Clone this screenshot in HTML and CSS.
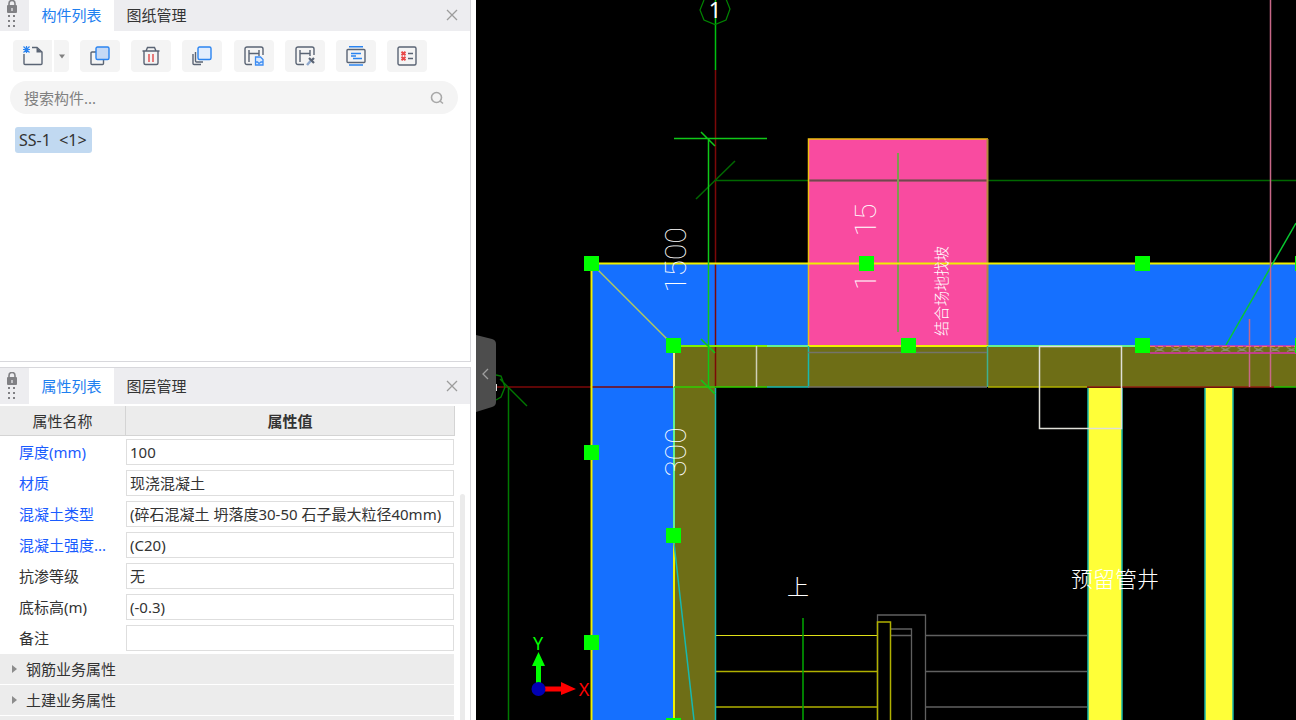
FILE: index.html
```html
<!DOCTYPE html>
<html lang="zh-CN">
<head>
    <meta charset="UTF-8">
    <meta name="viewport" content="width=device-width, initial-scale=1.0">
    <title>构件列表</title>
    <link rel="stylesheet" href="styles.css">
</head>
<body>
<aside class="dock">
    <section class="panel panel-components">
        <header class="panel-head">
            <svg class="grip" viewBox="0 0 12 28">
                <path d="M3 6V3.500a3 3 0 0 1 6 0V6" fill="none" stroke="#808084" stroke-width="1.600"/>
                <rect x="1" y="5" width="10" height="8" rx="1" fill="#808084"/>
                <rect x="5" y="8" width="2" height="3" fill="#c4c4c8"/>
                <path d="M2 15h2v2H2zM7 15h2v2H7zM2 20h2v2H2zM7 20h2v2H7zM2 25h2v2H2zM7 25h2v2H7z" fill="#808084"/>
            </svg>
            <button class="tab active">构件列表</button>
            <button class="tab">图纸管理</button>
            <button class="close" aria-label="关闭">
                <svg viewBox="0 0 12 12"><path d="M1 1l10 10M11 1L1 11"/></svg>
            </button>
        </header>

        <div class="toolbar">
            <div class="split">
                <button class="tool tool-new" aria-label="新建">
                    <svg viewBox="0 0 20 20">
                        <path class="ink" d="M1 8v9.500a1 1 0 0 0 1 1h16a1 1 0 0 0 1-1V6l-5-4.500H9"/>
                        <path d="M13.500 1.500L19 6.500h-5.500z" fill="#5a6474"/>
                        <path d="M0.500 0.500l6 6M6.500 0.500l-6 6M3.500 0v7M0 3.500h7" fill="none" stroke="#2b84f0" stroke-width="1.200"/>
                    </svg>
                </button>
                <button class="tool tool-more" aria-label="更多">
                    <svg viewBox="0 0 8 5"><path d="M1 0.500h6L4 4.500z" fill="#808080"/></svg>
                </button>
            </div>
            <button class="tool" aria-label="复制">
                <svg viewBox="0 0 20 20">
                    <path class="ink" d="M6 6H2a1 1 0 0 0-1 1v10.500a1 1 0 0 0 1 1h10.500a1 1 0 0 0 1-1V14"/>
                    <rect x="6" y="1" width="13" height="12.500" rx="1.500" fill="#c6d9f5" stroke="#2b84f0" stroke-width="1.400"/>
                </svg>
            </button>
            <button class="tool" aria-label="删除">
                <svg viewBox="0 0 20 20">
                    <path class="ink" d="M1.500 5h17M5 5l1.500-3.500h7L15 5M3 5v12a1.500 1.500 0 0 0 1.500 1.500h11A1.500 1.500 0 0 0 17 17V5"/>
                    <path d="M8 8v8M12 8v8" stroke="#e04848" stroke-width="1.400"/>
                </svg>
            </button>
            <button class="tool" aria-label="层间复制">
                <svg viewBox="0 0 20 20">
                    <path class="ink" d="M3.500 6v9a1 1 0 0 0 1 1H11M1 8v9.500a1 1 0 0 0 1 1h7"/>
                    <rect x="6" y="1" width="13" height="12.500" rx="1.500" fill="#e2edfd" stroke="#2b84f0" stroke-width="1.400"/>
                </svg>
            </button>
            <button class="tool" aria-label="存档">
                <svg viewBox="0 0 20 20">
                    <path class="ink" d="M8 18.500H3a2 2 0 0 1-2-2V3a2 2 0 0 1 2-2h14a2 2 0 0 1 2 2v6M5 4v12M5 7.500h10M15 4V10"/>
                    <path d="M11.500 11h5l2.500 2.500v5.500h-7.500zM11.500 16h2l1.500 1.500 2-1.500h2" fill="#dceafd" stroke="#3c8cf2" stroke-width="1.300"/>
                </svg>
            </button>
            <button class="tool" aria-label="提取">
                <svg viewBox="0 0 20 20">
                    <path class="ink" d="M9 18.500H3a2 2 0 0 1-2-2V3a2 2 0 0 1 2-2h14a2 2 0 0 1 2 2v6M5 4v12M5 7.500h10M15 4V10"/>
                    <path d="M12 19l4-4.500" stroke="#8fa8cc" stroke-width="2.500"/>
                    <path d="M14 12l5 5M16.500 14.500L19 12" stroke="#5a6474" stroke-width="2.200"/>
                </svg>
            </button>
            <button class="tool" aria-label="对齐">
                <svg viewBox="0 0 20 20">
                    <rect class="ink" x="1" y="3.500" width="18" height="13" rx="1"/>
                    <path d="M3 0.800h14M3 19h14M5 7.500h10M5 10h5M7 12.500h9" fill="none" stroke="#2b84f0" stroke-width="1.400"/>
                </svg>
            </button>
            <button class="tool" aria-label="列表">
                <svg viewBox="0 0 20 20">
                    <rect class="ink" x="1" y="1" width="18" height="18" rx="1.500"/>
                    <path class="ink" d="M11 7.500h5M11 12.500h5"/>
                    <path d="M4.500 5.800l4 3.400M8.500 5.800l-4 3.400M4.500 10.800l4 3.400M8.500 10.800l-4 3.400" stroke="#e84848" stroke-width="2"/>
                </svg>
            </button>
        </div>

        <div class="search">
            <input type="text" placeholder="搜索构件..." aria-label="搜索构件">
            <svg viewBox="0 0 14 14"><circle cx="6.500" cy="6.500" r="5"/><path d="M10 10l3 2.500"/></svg>
        </div>

        <ul class="component-list">
            <li class="selected">SS-1  &lt;1&gt;</li>
        </ul>
    </section>

    <section class="panel panel-props">
        <header class="panel-head">
            <svg class="grip" viewBox="0 0 12 28">
                <path d="M3 6V3.500a3 3 0 0 1 6 0V6" fill="none" stroke="#808084" stroke-width="1.600"/>
                <rect x="1" y="5" width="10" height="8" rx="1" fill="#808084"/>
                <rect x="5" y="8" width="2" height="3" fill="#c4c4c8"/>
                <path d="M2 15h2v2H2zM7 15h2v2H7zM2 20h2v2H2zM7 20h2v2H7zM2 25h2v2H2zM7 25h2v2H7z" fill="#808084"/>
            </svg>
            <button class="tab active">属性列表</button>
            <button class="tab">图层管理</button>
            <button class="close" aria-label="关闭">
                <svg viewBox="0 0 12 12"><path d="M1 1l10 10M11 1L1 11"/></svg>
            </button>
        </header>

        <div class="props-body">
            <table class="props">
                <thead>
                <tr><th class="col-name">属性名称</th><th class="col-value">属性值</th></tr>
                </thead>
                <tbody>
                <tr class="key">
                    <td><label for="thickness">厚度(mm)</label></td>
                    <td><input type="text" id="thickness" value="100"></td>
                </tr>
                <tr class="key">
                    <td><label for="material">材质</label></td>
                    <td><input type="text" id="material" value="现浇混凝土"></td>
                </tr>
                <tr class="key">
                    <td><label for="concrete">混凝土类型</label></td>
                    <td><input type="text" id="concrete" value="(碎石混凝土 坍落度30-50 石子最大粒径40mm)"></td>
                </tr>
                <tr class="key">
                    <td><label for="strength">混凝土强度...</label></td>
                    <td><input type="text" id="strength" value="(C20)"></td>
                </tr>
                <tr>
                    <td><label for="seepage">抗渗等级</label></td>
                    <td><input type="text" id="seepage" value="无"></td>
                </tr>
                <tr>
                    <td><label for="bottom">底标高(m)</label></td>
                    <td><input type="text" id="bottom" value="(-0.3)"></td>
                </tr>
                <tr>
                    <td><label for="note">备注</label></td>
                    <td><input type="text" id="note" value=""></td>
                </tr>
                <tr class="group">
                    <td colspan="2"><button><svg viewBox="0 0 5 8"><path d="M0 0l5 4-5 4z"/></svg>钢筋业务属性</button></td>
                </tr>
                <tr class="group">
                    <td colspan="2"><button><svg viewBox="0 0 5 8"><path d="M0 0l5 4-5 4z"/></svg>土建业务属性</button></td>
                </tr>
                <tr class="group">
                    <td colspan="2"><button aria-label="展开"><svg viewBox="0 0 5 8"><path d="M0 0l5 4-5 4z"/></svg></button></td>
                </tr>
                </tbody>
            </table>
            <div class="scroll-track"><div class="scroll-thumb"></div></div>
        </div>
    </section>
</aside>

<main class="viewport">
    <svg class="drawing" viewBox="476 0 820 720" preserveAspectRatio="xMinYMin slice">
        <defs>
            <pattern id="hatch" x="1151" y="346" width="16.500" height="7" patternUnits="userSpaceOnUse">
                <path d="M4 1.500l9 4M13 1.500l-9 4M6 3.500h5" stroke="#8c8c70" fill="none"/>
            </pattern>
        </defs>

        <!-- slabs and walls -->
        <path d="M591 263H1296V346H674V720H591z" fill="#1570ff"/>
        <path d="M674 346H1296V387H715V720H674z" fill="#6e6e16"/>
        <rect x="808" y="139" width="180" height="207" fill="#f94ba0"/>
        <rect x="1088" y="388" width="34" height="332" fill="#ffff38"/>
        <rect x="1205" y="388" width="28" height="332" fill="#ffff38"/>

        <!-- axes -->
        <g fill="none">
            <path d="M715.500 70V387" stroke="#7c0808" stroke-width="1.500"/>
            <path d="M496 387H674" stroke="#7c0808" stroke-width="1.500"/>
            <path d="M715.500 0V70" stroke="#00c010" stroke-width="1.500"/>
            <path d="M704 0L700 10L704 20L715 24.500L726 20L730 9L726 -1" stroke="#008400" stroke-width="1.200"/>
            <path d="M496 375L501 376L505 387L501 397L496 400M500 379L527 406" stroke="#007800" stroke-width="1.400"/>
            <path d="M508.500 387V720" stroke="#007800" stroke-width="1.500"/>
            <path d="M496.500 384V391" stroke="#ddd"/>
            <path d="M715 180.500H1296M696 199L735 161" stroke="#006800" stroke-width="1.500"/>
            <path d="M808 180.500H988" stroke="#744450" stroke-width="1.500"/>
            <path d="M898 153V332" stroke="#7e9b4f" stroke-width="2"/>
        </g>

        <!-- stairs -->
        <g fill="none" stroke="#606060">
            <path d="M877.500 720V615H925.500V720M891 629H911.500V720M891 635.500H911M926 635.500H1087M926 671.500H1087M926 707H1087" stroke-width="1.300"/>
            <path d="M715 635.500H877" stroke="#e0e018" stroke-width="1.200"/>
            <path d="M715 671.500H877M715 707H877M877.500 720V622H890.500V720" stroke="#b0b000" stroke-width="1.500"/>
            <path d="M803 618V720" stroke="#00a800" stroke-width="1.500"/>
        </g>

        <!-- outlines -->
        <g fill="none">
            <path d="M808.500 346V139H988" stroke="#f0c010" stroke-width="1.500"/>
            <path d="M987.500 139V346" stroke="#b58a3c" stroke-width="2"/>
            <path d="M591.500 720V263.500H1296" stroke="#f0f000" stroke-width="2"/>
            <path d="M591 263L674 346" stroke="#b4c860" stroke-width="1.500"/>
            <path d="M674 346V387" stroke="#f4f090" stroke-width="2"/>
            <path d="M674 387V536M767 346H808M988 346H1142" stroke="#64f090" stroke-width="2"/>
            <path d="M674 536V720M808 346H988" stroke="#f0f000" stroke-width="2"/>
            <path d="M674 346H767" stroke="#80f000" stroke-width="2"/>
            <path d="M674 387H767" stroke="#30d000" stroke-width="1.500"/>
            <path d="M674 543L694 720M767 387H808.500V346M715.500 388V720" stroke="#18b8b0" stroke-width="1.500"/>
            <path d="M987.500 346V387" stroke="#40b090" stroke-width="1.500"/>
            <path d="M1088 388V720M1122 388V720M1205 388V720M1233 388V720" stroke="#18b8a8" stroke-width="1.500"/>
            <path d="M808 352.500H987M808 387H987" stroke="#74746a" stroke-width="1.500"/>
            <path d="M988 387H1087" stroke="#b0b000" stroke-width="1.500"/>
            <path d="M1087 387H1274" stroke="#902010" stroke-width="1.500"/>
            <path d="M1274 387H1296" stroke="#20c000" stroke-width="1.500"/>
            <path d="M756.500 346V387" stroke="#d0d0b8" stroke-width="1.500"/>
            <path d="M674 138.500H767M708.500 138V387M701 132L715 146M701 339L715 353M701 380L715 394" stroke="#10c818" stroke-width="1.500"/>
            <path d="M1226 345L1296 223" stroke="#08c830" stroke-width="1.500"/>
            <path d="M1270.500 0V387M1249.500 319V387" stroke="#c86888" stroke-width="1.500"/>
            <path d="M1150 346H1296M1150 353H1296" stroke="#dc30b0" stroke-width="1.500"/>
            <path d="M1150 346.500H1296" stroke="#f08060" stroke-dasharray="5 3"/>
            <path d="M1039.500 346.500H1121.500V428.500H1039.500z" stroke="#e0e0d8" stroke-width="1.500"/>
        </g>
        <rect x="1151" y="347" width="145" height="6" fill="url(#hatch)"/>

        <!-- labels -->
        <g class="labels">
            <text class="axis-no" x="715" y="18">1</text>
            <text class="dim" transform="translate(686 260) rotate(-90)">1500</text>
            <text class="dim" transform="translate(686 452) rotate(-90)">300</text>
            <text class="dim" transform="translate(876 220) rotate(-90)">15</text>
            <text class="dim" transform="translate(876 282) rotate(-90)">1</text>
            <text class="slope" transform="translate(947 291) rotate(-90)">结合场地找坡</text>
            <text class="room" x="1115" y="587">预留管井</text>
            <text class="room" x="798" y="595">上</text>
        </g>

        <!-- grips -->
        <g fill="#00ff00">
            <rect x="584" y="256" width="15" height="15"/>
            <rect x="859" y="256" width="15" height="15"/>
            <rect x="1135" y="256" width="15" height="15"/>
            <rect x="1295" y="256" width="15" height="15"/>
            <rect x="666" y="338" width="15" height="15"/>
            <rect x="901" y="338" width="15" height="15"/>
            <rect x="1135" y="338" width="15" height="15"/>
            <rect x="1295" y="338" width="15" height="15"/>
            <rect x="584" y="445" width="15" height="15"/>
            <rect x="666" y="528" width="15" height="15"/>
            <rect x="584" y="635" width="15" height="15"/>
            <rect x="666" y="718" width="15" height="15"/>
        </g>

        <!-- coordinate system -->
        <path d="M536 684V666H532L538.500 652L545 666H541V684z" fill="#00ff00"/>
        <path d="M545 686.500H561V682L576 689L561 695V691.500H545z" fill="#ff0000"/>
        <circle cx="538.500" cy="689" r="7" fill="#0000b4"/>
        <text class="ucs ucs-y" x="538" y="650">Y</text>
        <text class="ucs ucs-x" x="584" y="696">X</text>
    </svg>

    <button class="collapse" aria-label="收起">
        <svg viewBox="0 0 20 77">
            <path d="M0 0L16 4Q20 5 20 9V67Q20 71 16 72L0 77z" fill="#4d4d4d"/>
            <path d="M12 34L7 39L12 44" fill="none" stroke="#a0a0a0" stroke-width="1.300"/>
        </svg>
    </button>
</main>
</body>
</html>
```
FILE: styles.css
```css
* {
    box-sizing: border-box;
}

body {
    display: flex;
    height: 100vh;
    margin: 0;
    overflow: hidden;
    font-family: "Noto Sans", "Noto Sans CJK SC", sans-serif;
    font-size: 15px;
    line-height: 20px;
    color: #333;
    background: #fff;
}

button,
input {
    font: inherit;
    color: inherit;
    border: none;
    padding: 0;
}

button {
    background: none;
    cursor: pointer;
}

.dock {
    display: flex;
    flex-direction: column;
    flex: none;
    gap: 5px;
    width: 476px;
    padding-right: 5px;
}

.panel {
    border-right: 1px solid #d8d8dc;
}

.panel-components {
    flex: 0 0 362px;
    border-bottom: 1px solid #d8d8dc;
}

.panel-props {
    display: flex;
    flex-direction: column;
    flex: 1;
    min-height: 0;
    overflow: hidden;
    border-top: 1px solid #d8d8dc;
}

.panel-head {
    display: flex;
    align-items: stretch;
    height: 31px;
    padding-bottom: 2px;
    background: #ededf0;
}

.panel-props .panel-head {
    flex: none;
    height: 36px;
    padding-bottom: 0;
}

.grip {
    align-self: center;
    flex: none;
    width: 12px;
    height: 28px;
    margin: 0 11px 0 6px;
}

.panel-components .grip {
    align-self: flex-start;
}

.tab {
    width: 85px;
    white-space: nowrap;
}

.tab.active {
    color: #1e80f0;
    background: #fff;
}

.panel-components .tab.active {
    margin-bottom: -2px;
    padding-bottom: 2px;
}

.close {
    width: 36px;
    margin-left: auto;
}

.close svg {
    display: block;
    width: 12px;
    height: 12px;
    margin: 0 auto;
    fill: none;
    stroke: #9c9c9c;
    stroke-width: 1.3;
}

.toolbar {
    display: flex;
    justify-content: space-between;
    padding: 9px 43px 9px 13px;
}

.split {
    display: flex;
    gap: 2px;
}

.tool {
    display: flex;
    align-items: center;
    justify-content: center;
    width: 40px;
    height: 32px;
    background: #f4f4f4;
    border-radius: 4px;
}

.tool svg {
    width: 20px;
    height: 20px;
    fill: none;
}

.tool .ink {
    fill: none;
    stroke: #5a6474;
    stroke-width: 1.4;
}

.tool-new {
    width: 39px;
    border-radius: 4px 0 0 4px;
}

.tool-more {
    width: 15px;
    border-radius: 0 4px 4px 0;
}

.tool-more svg {
    width: 8px;
    height: 5px;
}

.search {
    display: flex;
    align-items: center;
    height: 33px;
    margin: 0 12px 0 10px;
    padding: 0 14px;
    background: #f4f4f4;
    border-radius: 17px;
}

.search input {
    flex: 1;
    min-width: 0;
    background: none;
    outline: none;
}

.search input::placeholder {
    color: #808080;
}

.search svg {
    width: 14px;
    height: 14px;
    fill: none;
    stroke: #a8a8a8;
    stroke-width: 1.6;
}

.component-list {
    display: flex;
    flex-direction: column;
    align-items: flex-start;
    margin: 0;
    padding: 13px 15px;
    list-style: none;
}

.component-list li {
    min-width: 77px;
    padding: 3px 5px 3px 4px;
    font-size: 16px;
    white-space: pre;
    border-radius: 3px;
}

.component-list .selected {
    background: #c1d9f1;
}

.props-body {
    display: flex;
    flex: 1;
    min-height: 0;
    padding-top: 2px;
}

.props {
    width: 455px;
    align-self: flex-start;
    table-layout: fixed;
    border-collapse: separate;
    border-spacing: 0;
}

.props th {
    height: 30px;
    padding: 0;
    background: #ececec;
    border-right: 1px solid #d4d4d4;
    border-bottom: 1px solid #d4d4d4;
}

.props .col-name {
    width: 126px;
    font-weight: normal;
}

.props .col-value {
    font-weight: 600;
}

.props td {
    height: 31px;
    padding: 0 1px 0 0;
}

.props label {
    display: block;
    padding-left: 19px;
    white-space: nowrap;
}

.props .key label {
    color: #1a5cff;
}

.props input {
    display: block;
    width: 100%;
    height: 26px;
    padding: 0 3px;
    border: 1px solid #dedede;
    background: #fff;
}

.props .group button {
    display: flex;
    align-items: center;
    gap: 9px;
    width: 100%;
    height: 30px;
    padding-left: 12px;
    background: #ececec;
}

.props .group svg {
    width: 5px;
    height: 8px;
    fill: #8c8c8c;
}

.scroll-track {
    width: 5px;
    margin-left: 5px;
    padding-top: 88px;
}

.scroll-thumb {
    height: 100%;
    background: #ebebeb;
    border-radius: 3px 3px 0 0;
}

.viewport {
    position: relative;
    flex: 1;
    min-width: 0;
    background: #000;
}

.drawing {
    display: block;
    width: 100%;
    height: 100%;
}

.labels text {
    fill: #fff;
    text-anchor: middle;
}

.labels .axis-no {
    font-size: 22px;
}

.labels .dim {
    font-family: Roboto, sans-serif;
    font-size: 30px;
    font-weight: 100;
}

.labels .slope {
    font-size: 15px;
    font-weight: 300;
}

.labels .room {
    font-size: 22px;
    font-weight: 300;
}

.ucs {
    font-size: 18px;
    text-anchor: middle;
}

.ucs-y {
    fill: #00ff00;
}

.ucs-x {
    fill: #ff0000;
}

.collapse {
    position: absolute;
    top: 335px;
    left: 0;
    width: 20px;
    height: 77px;
}

.collapse svg {
    display: block;
    width: 20px;
    height: 77px;
}
```
